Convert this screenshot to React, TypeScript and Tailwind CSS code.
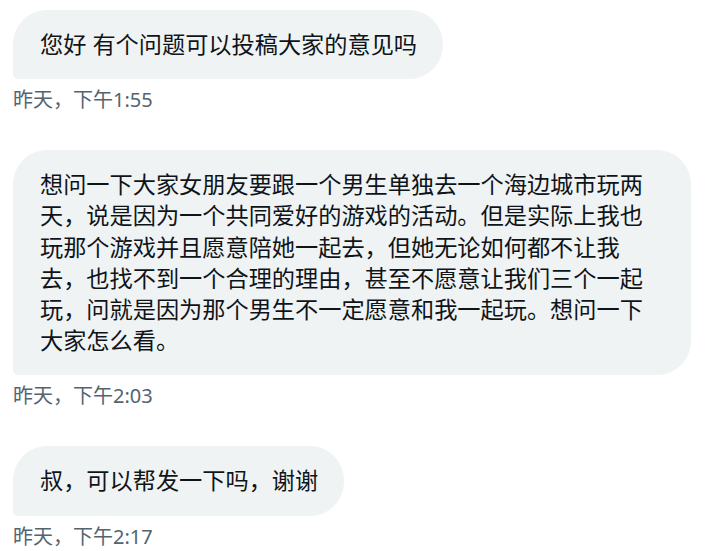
const messages = [
  { id: 1, text: '您好 有个问题可以投稿大家的意见吗', time: '昨天，下午1:55' },
  {
    id: 2,
    text: '想问一下大家女朋友要跟一个男生单独去一个海边城市玩两天，说是因为一个共同爱好的游戏的活动。但是实际上我也玩那个游戏并且愿意陪她一起去，但她无论如何都不让我去，也找不到一个合理的理由，甚至不愿意让我们三个一起玩，问就是因为那个男生不一定愿意和我一起玩。想问一下大家怎么看。',
    time: '昨天，下午2:03',
  },
  { id: 3, text: '叔，可以帮发一下吗，谢谢', time: '昨天，下午2:17' },
];

export default function App() {
  return (
    <div
      className="min-h-screen bg-white pl-[13px] pr-[23px] pt-[10px] flex flex-col gap-[38px]"
      style={{ fontFamily: '"Noto Sans", "Noto Sans CJK SC", sans-serif' }}
    >
      {messages.map((m) => (
        <div key={m.id} className="flex flex-col items-start">
          {/* Bubble */}
          <div className="bg-[#eff3f4] text-[#0f1419] text-[23.2px] leading-[31.2px] pl-[27px] pr-[26px] py-[19px] rounded-[34px] rounded-bl-[5px] max-w-[678px]">
            {m.text}
          </div>
          <div className="mt-[8px] text-[20px] leading-[25px] text-[#536471]">{m.time}</div>
        </div>
      ))}
    </div>
  );
}
